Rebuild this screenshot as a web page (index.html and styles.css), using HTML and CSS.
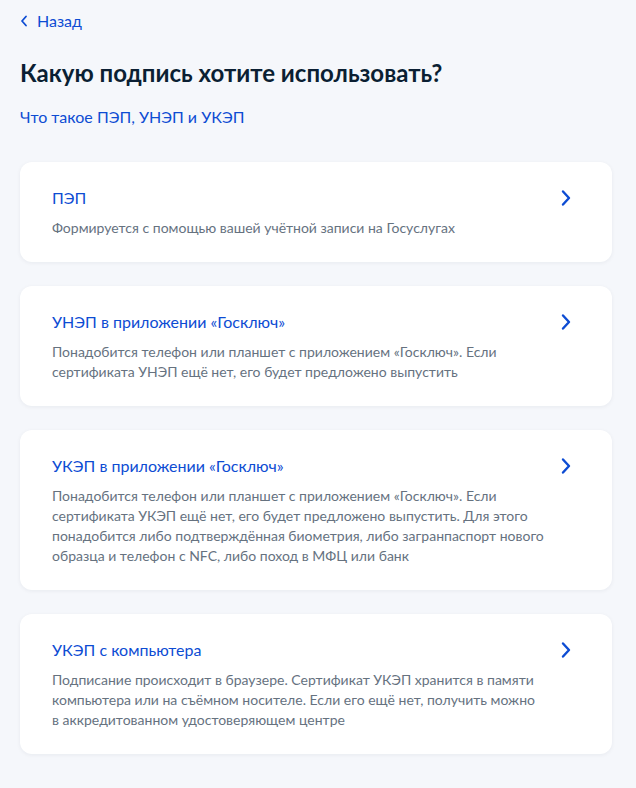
FILE: index.html
```html
<!DOCTYPE html>
<html lang="ru">
<head>
    <meta charset="UTF-8">
    <meta name="viewport" content="width=device-width, initial-scale=1.0">
    <title>Выбор подписи</title>
    <link rel="stylesheet" href="styles.css">
</head>
<body>
    <div class="page">
        <a class="back-link" href="#">
            <svg class="back-icon" width="8" height="12" viewBox="0 0 8 12">
                <path d="M6 1.5L2 6l4 4.5" fill="none" stroke="#0d4cd3" stroke-width="1.8" stroke-linecap="round" stroke-linejoin="round"/>
            </svg>
            Назад
        </a>
        <h1>Какую подпись хотите использовать?</h1>
        <a class="info-link" href="#">Что такое ПЭП, УНЭП и УКЭП</a>

        <ul class="sign-list">
            <li class="sign-card">
                <div class="sign-text">
                    <div class="sign-title">ПЭП</div>
                    <p class="sign-desc">Формируется с помощью вашей учётной записи на Госуслугах</p>
                </div>
                <svg class="arrow" width="24" height="24" viewBox="0 0 24 24">
                    <path d="M9 5.5l6 6.5-6 6.5" fill="none" stroke="#0d4cd3" stroke-width="2.4" stroke-linecap="round" stroke-linejoin="round"/>
                </svg>
            </li>
            <li class="sign-card">
                <div class="sign-text">
                    <div class="sign-title">УНЭП в приложении «Госключ»</div>
                    <p class="sign-desc">Понадобится телефон или планшет с приложением «Госключ». Если сертификата УНЭП ещё нет, его будет предложено выпустить</p>
                </div>
                <svg class="arrow" width="24" height="24" viewBox="0 0 24 24">
                    <path d="M9 5.5l6 6.5-6 6.5" fill="none" stroke="#0d4cd3" stroke-width="2.4" stroke-linecap="round" stroke-linejoin="round"/>
                </svg>
            </li>
            <li class="sign-card">
                <div class="sign-text">
                    <div class="sign-title">УКЭП в приложении «Госключ»</div>
                    <p class="sign-desc">Понадобится телефон или планшет с приложением «Госключ». Если сертификата УКЭП ещё нет, его будет предложено выпустить. Для этого понадобится либо подтверждённая биометрия, либо загранпаспорт нового образца и телефон с NFC, либо поход в МФЦ или банк</p>
                </div>
                <svg class="arrow" width="24" height="24" viewBox="0 0 24 24">
                    <path d="M9 5.5l6 6.5-6 6.5" fill="none" stroke="#0d4cd3" stroke-width="2.4" stroke-linecap="round" stroke-linejoin="round"/>
                </svg>
            </li>
            <li class="sign-card">
                <div class="sign-text">
                    <div class="sign-title">УКЭП с компьютера</div>
                    <p class="sign-desc">Подписание происходит в браузере. Сертификат УКЭП хранится в памяти компьютера или на съёмном носителе. Если его ещё нет, получить можно в аккредитованном удостоверяющем центре</p>
                </div>
                <svg class="arrow" width="24" height="24" viewBox="0 0 24 24">
                    <path d="M9 5.5l6 6.5-6 6.5" fill="none" stroke="#0d4cd3" stroke-width="2.4" stroke-linecap="round" stroke-linejoin="round"/>
                </svg>
            </li>
        </ul>
    </div>
</body>
</html>
```

FILE: styles.css
```css
body {
    margin: 0;
    padding: 0;
    background-color: #f5f7fb;
    font-family: Lato, "Noto Sans", Arial, sans-serif;
    color: #0b1f33;
}
.page {
    padding: 9px 24px 32px 20px;
}
a {
    color: #0d4cd3;
    text-decoration: none;
}
.back-link {
    display: inline-flex;
    align-items: center;
    gap: 9px;
    font-size: 16px;
    line-height: 24px;
}
h1 {
    margin: 24px 0 0;
    font-size: 24px;
    line-height: 32px;
    font-weight: 700;
}
.info-link {
    display: inline-block;
    margin-top: 17px;
    font-size: 16px;
    line-height: 22px;
}
/* список вариантов подписи */
.sign-list {
    list-style: none;
    margin: 34px 0 0;
    padding: 0;
    display: flex;
    flex-direction: column;
    gap: 24px;
}
.sign-card {
    display: flex;
    align-items: flex-start;
    justify-content: space-between;
    background-color: #fff;
    border-radius: 12px;
    box-shadow: 0 1px 4px rgba(11, 31, 51, 0.06);
    padding: 24px 32px 24px 32px;
    cursor: pointer;
}
.sign-text {
    width: 492px;
}
.sign-title {
    color: #0d4cd3;
    font-size: 16px;
    line-height: 24px;
}
.sign-desc {
    margin: 8px 0 0;
    color: #66727f;
    font-size: 14px;
    line-height: 20px;
}
.arrow {
    flex-shrink: 0;
    margin-right: 2px;
}
```
